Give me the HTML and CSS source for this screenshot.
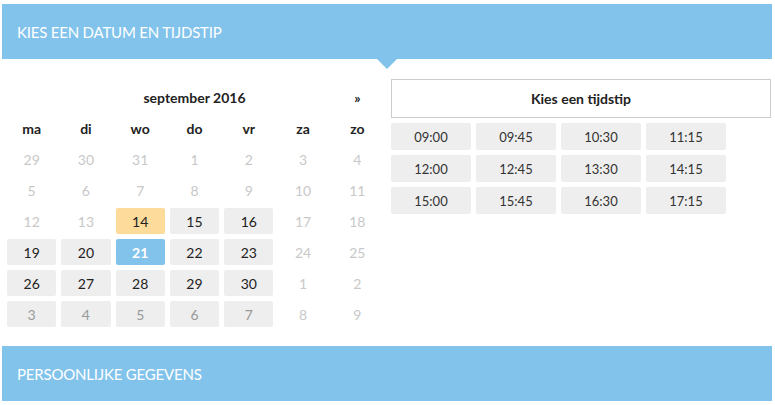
FILE: index.html
```html
<!DOCTYPE html>
<html lang="nl">
<head>
<meta charset="utf-8">
<link rel="stylesheet" href="styles.css">
</head>
<body>
<div class="page">
  <div class="section-head section-head--open">
    <span class="section-title">KIES EEN DATUM EN TIJDSTIP</span>
  </div>
  <div class="section-body">
    <div class="calendar">
      <div class="cal-nav"></div>
      <div class="cal-month">september 2016</div>
      <div class="cal-nav">»</div>
      <div class="wd">ma</div><div class="wd">di</div><div class="wd">wo</div><div class="wd">do</div><div class="wd">vr</div><div class="wd">za</div><div class="wd">zo</div>
      <div class="day off">29</div><div class="day off">30</div><div class="day off">31</div><div class="day off">1</div><div class="day off">2</div><div class="day off">3</div><div class="day off">4</div>
      <div class="day off">5</div><div class="day off">6</div><div class="day off">7</div><div class="day off">8</div><div class="day off">9</div><div class="day off">10</div><div class="day off">11</div>
      <div class="day off">12</div><div class="day off">13</div><div class="day av today">14</div><div class="day av">15</div><div class="day av">16</div><div class="day off">17</div><div class="day off">18</div>
      <div class="day av">19</div><div class="day av">20</div><div class="day av sel">21</div><div class="day av">22</div><div class="day av">23</div><div class="day off">24</div><div class="day off">25</div>
      <div class="day av">26</div><div class="day av">27</div><div class="day av">28</div><div class="day av">29</div><div class="day av">30</div><div class="day off">1</div><div class="day off">2</div>
      <div class="day av next">3</div><div class="day av next">4</div><div class="day av next">5</div><div class="day av next">6</div><div class="day av next">7</div><div class="day off">8</div><div class="day off">9</div>
    </div>
    <div class="times">
      <div class="times-title">Kies een tijdstip</div>
      <div class="times-grid">
        <div class="slot">09:00</div><div class="slot">09:45</div><div class="slot">10:30</div><div class="slot">11:15</div>
        <div class="slot">12:00</div><div class="slot">12:45</div><div class="slot">13:30</div><div class="slot">14:15</div>
        <div class="slot">15:00</div><div class="slot">15:45</div><div class="slot">16:30</div><div class="slot">17:15</div>
      </div>
    </div>
  </div>
  <div class="section-head">
    <span class="section-title">PERSOONLIJKE GEGEVENS</span>
  </div>
</div>
</body>
</html>
```

FILE: styles.css
```css
html, body {
  margin: 0;
  padding: 0;
  background: #fff;
}
body {
  font-family: Lato, "Open Sans", sans-serif;
  color: #222;
}
.page {
  width: 770px;
  padding: 4px 0 0 2px;
}
.section-head {
  position: relative;
  height: 55px;
  background: #82c3eb;
  display: flex;
  align-items: center;
  padding-left: 15px;
}
.section-head--open::after {
  content: "";
  position: absolute;
  left: 375px;
  top: 55px;
  border-left: 10px solid transparent;
  border-right: 10px solid transparent;
  border-top: 10px solid #82c3eb;
}
.section-title {
  color: #fff;
  font-size: 15px;
  letter-spacing: -0.2px;
}
.section-body {
  display: flex;
  align-items: flex-start;
  padding: 20px 0 19px 0;
  height: 248px;
}
.calendar {
  margin: 5px 0 0 5px;
  width: 375px;
  display: grid;
  grid-template-columns: repeat(7, 1fr);
  grid-auto-rows: 26px;
  gap: 5px;
  font-size: 14px;
}
.cal-month {
  grid-column: span 5;
  display: flex;
  align-items: center;
  justify-content: center;
  font-weight: bold;
}
.cal-nav {
  display: flex;
  align-items: center;
  justify-content: center;
  font-weight: bold;
}
.wd {
  display: flex;
  align-items: center;
  justify-content: center;
  font-weight: bold;
}
.day {
  display: flex;
  align-items: center;
  justify-content: center;
  border-radius: 2px;
}
.day.off {
  color: #c8c8c8;
}
.day.av {
  background: #eeeeee;
  color: #222;
}
.day.next {
  color: #999;
}
.day.today {
  background: #fddb9b;
}
.day.sel {
  background: #82c3eb;
  color: #fff;
  font-weight: bold;
}
.times {
  margin-left: 9px;
  width: 380px;
}
.times-title {
  height: 37px;
  border: 1px solid #cccccc;
  display: flex;
  align-items: center;
  justify-content: center;
  font-weight: bold;
  font-size: 14px;
}
.times-grid {
  margin-top: 5px;
  display: grid;
  grid-template-columns: repeat(4, 80px);
  grid-auto-rows: 27px;
  gap: 5px;
}
.slot {
  background: #eeeeee;
  border-radius: 2px;
  display: flex;
  align-items: center;
  justify-content: center;
  font-size: 13px;
  color: #333;
}
```
